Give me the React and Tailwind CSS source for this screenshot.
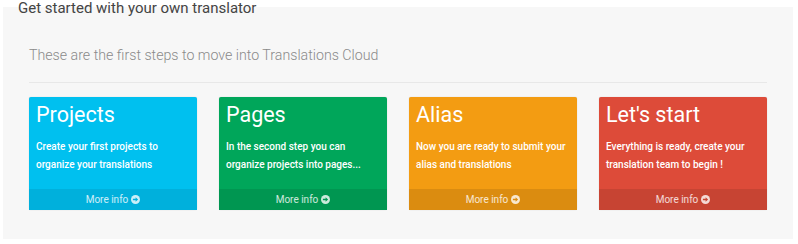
import React from "react";

const cards = [
  { title: "Projects", text: ["Create your first projects to", "organize your translations"], bg: "bg-[#00c0ef]", foot: "bg-[#00b0dc]", arrow: "fill-[#00b0dc]" },
  { title: "Pages", text: ["In the second step you can", "organize projects into pages..."], bg: "bg-[#00a65a]", foot: "bg-[#009651]", arrow: "fill-[#009651]" },
  { title: "Alias", text: ["Now you are ready to submit your", "alias and translations"], bg: "bg-[#f39c12]", foot: "bg-[#db8c10]", arrow: "fill-[#db8c10]" },
  { title: "Let's start", text: ["Everything is ready, create your", "translation team to begin !"], bg: "bg-[#dd4b39]", foot: "bg-[#c74433]", arrow: "fill-[#c74433]" },
];

function Arrow({ cls }) {
  return (
    <svg width="9" height="9" viewBox="0 0 16 16" className="inline-block ml-[3px] align-[-1px]">
      <circle cx="8" cy="8" r="8" fill="currentColor" />
      <path d="M3.4 6.8h4.8V4.1L12.6 8L8.2 11.9V9.2H3.4z" className={cls} />
    </svg>
  );
}

export default function App() {
  return (
    <div className="w-[798px] h-[244px] bg-white font-['Roboto',sans-serif] pt-[7px] overflow-hidden">
      <div className="flow-root ml-[3px] w-[790px] h-[232px] bg-[#f7f7f7]">
        <div className="-mt-[8px] ml-[15px] text-[15px] leading-[18px] text-[#444]">Get started with your own translator</div>
        <div className="mx-[26px] mt-[29px]">
          <div className="text-[14.2px] leading-[18px] font-light text-[#8a8a8a]">These are the first steps to move into Translations Cloud</div>
          <div className="mt-[18px] border-t border-[#e8e8e8] w-[738px]" />
          <div className="mt-[14px] grid grid-cols-4 gap-x-[22px] w-[738px]">
            {cards.map((c, i) => (
              <div key={i} className={`${c.bg} h-[113px] flex flex-col rounded-[2px] shadow-[0_0_1px_rgba(0,0,0,0.25)] text-white`}>
                <div className="flex-1 px-[7px] pt-[6px]">
                  <div className="text-[21.5px] leading-[24px]">{c.title}</div>
                  <div className="mt-[11px] text-[10px] leading-[18px] font-medium whitespace-nowrap">
                    {c.text[0]}<br />{c.text[1]}
                  </div>
                </div>
                <div className={`${c.foot} h-[21px] text-center text-[10px] leading-[21px] text-white/80`}>
                  More info<Arrow cls={c.arrow} />
                </div>
              </div>
            ))}
          </div>
        </div>
      </div>
    </div>
  );
}
